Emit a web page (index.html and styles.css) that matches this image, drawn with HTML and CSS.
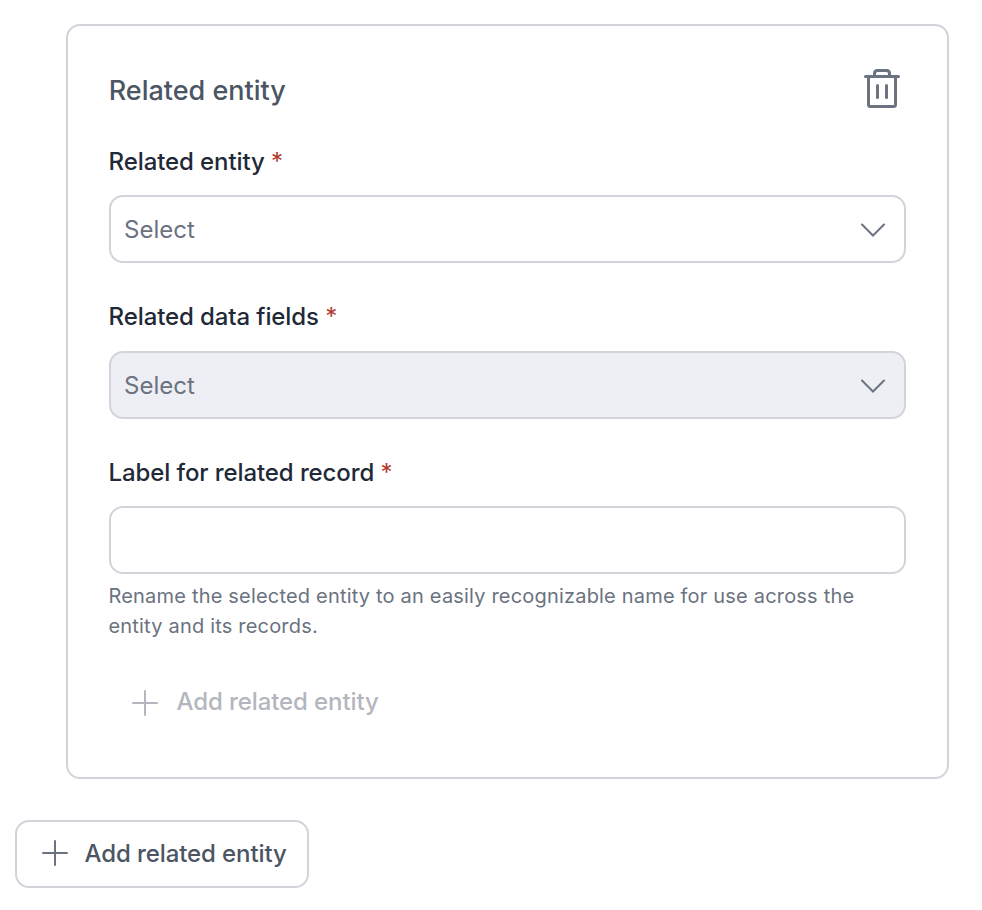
FILE: index.html
```html
<!DOCTYPE html>
<html lang="en">
<head>
<meta charset="utf-8">
<title>Related entity</title>
<link rel="stylesheet" href="styles.css">
</head>
<body>
<section class="card">
  <header class="card-header">
    <h2 class="title">Related entity</h2>
    <svg class="trash" viewBox="0 0 36 40" width="36" height="40"><path d="M1.500 7.500H34.500M10.500 7V4.500Q10.500 1.500 13.500 1.500H22.500Q25.500 1.500 25.500 4.500V7M4.500 7.500V35.500Q4.500 37.500 6.500 37.500H29.500Q31.500 37.500 31.500 35.500V7.500M13.500 16.500V28.500M22.500 16.500V28.500"/></svg>
  </header>
  <div class="field">
    <div class="label">Related entity <span class="star">*</span></div>
    <div class="control"><span>Select</span><svg class="chevron" viewBox="0 0 24 14" width="24" height="14"><path d="M1 1.500L12 12.500L23 1.500"/></svg></div>
  </div>
  <div class="field second">
    <div class="label">Related data fields <span class="star">*</span></div>
    <div class="control disabled"><span>Select</span><svg class="chevron" viewBox="0 0 24 14" width="24" height="14"><path d="M1 1.500L12 12.500L23 1.500"/></svg></div>
  </div>
  <div class="field last">
    <div class="label">Label for related record <span class="star">*</span></div>
    <div class="control"></div>
    <p class="help">Rename the selected entity to an easily recognizable name for use across the entity and its records.</p>
  </div>
  <div class="add muted"><svg class="plus" viewBox="0 0 26 26" width="26" height="26"><path d="M1 13H25M13 1V25"/></svg><span>Add related entity</span></div>
</section>
<div class="add outlined"><svg class="plus" viewBox="0 0 26 26" width="26" height="26"><path d="M1 13H25M13 1V25"/></svg><span>Add related entity</span></div>
</body>
</html>
```
FILE: styles.css
```css
* { box-sizing: border-box; }
body { margin: 0; padding: 24px 33px 0 15px; background: #fff; font-family: Inter, sans-serif; color: #1f2937; }
.card { height: 755px; margin-left: 51px; padding: 43px 41px 0; border: 2px solid #d1d5db; border-radius: 14px; }
.card-header { display: flex; justify-content: space-between; height: 79px; padding-right: 6px; }
.title { margin: 0 0 0 -0.3px; padding-top: 4px; font-size: 27px; line-height: 36px; font-weight: 500; color: #4b5563; }
svg { display: block; flex: none; fill: none; stroke-linecap: round; }
.trash { stroke: #6b7280; stroke-width: 3; }
.field { height: 156px; }
.label { height: 47px; margin-left: -0.4px; font-size: 24px; line-height: 28px; font-weight: 500; letter-spacing: -0.1px; }
.second { height: 155px; }
.second .label { height: 47px; line-height: 26px; }
.star { color: #b13a30; font-weight: 400; }
.control { display: flex; align-items: center; justify-content: space-between; height: 68px; padding: 0 19px 0 13px; border: 2px solid #d1d5db; border-radius: 14px; font-size: 24px; color: #6b7280; }
.disabled { background: #eeeff4; }
.disabled span { padding-top: 1px; }
.chevron { margin-top: 2px; stroke: #6b7280; stroke-width: 2; }
.last { height: 209px; }
.help { margin: 7px 0 0 -0.5px; font-size: 20px; line-height: 30px; letter-spacing: 0.19px; color: #6b7280; }
.add { display: flex; align-items: center; gap: 18.5px; height: 68px; font-size: 24px; font-weight: 500; letter-spacing: -0.1px; white-space: nowrap; }
.plus { stroke: #6b7280; stroke-width: 2; }
.muted { padding-left: 23px; color: #b3b6be; }
.muted .plus { margin-top: 1px; stroke: #b3b6be; }
.muted span { padding-bottom: 2px; }
.outlined { width: 294px; margin-top: 41px; padding: 0 0 2px 25px; gap: 16.5px; border: 2px solid #d1d5db; border-radius: 14px; color: #4b5563; }
```
